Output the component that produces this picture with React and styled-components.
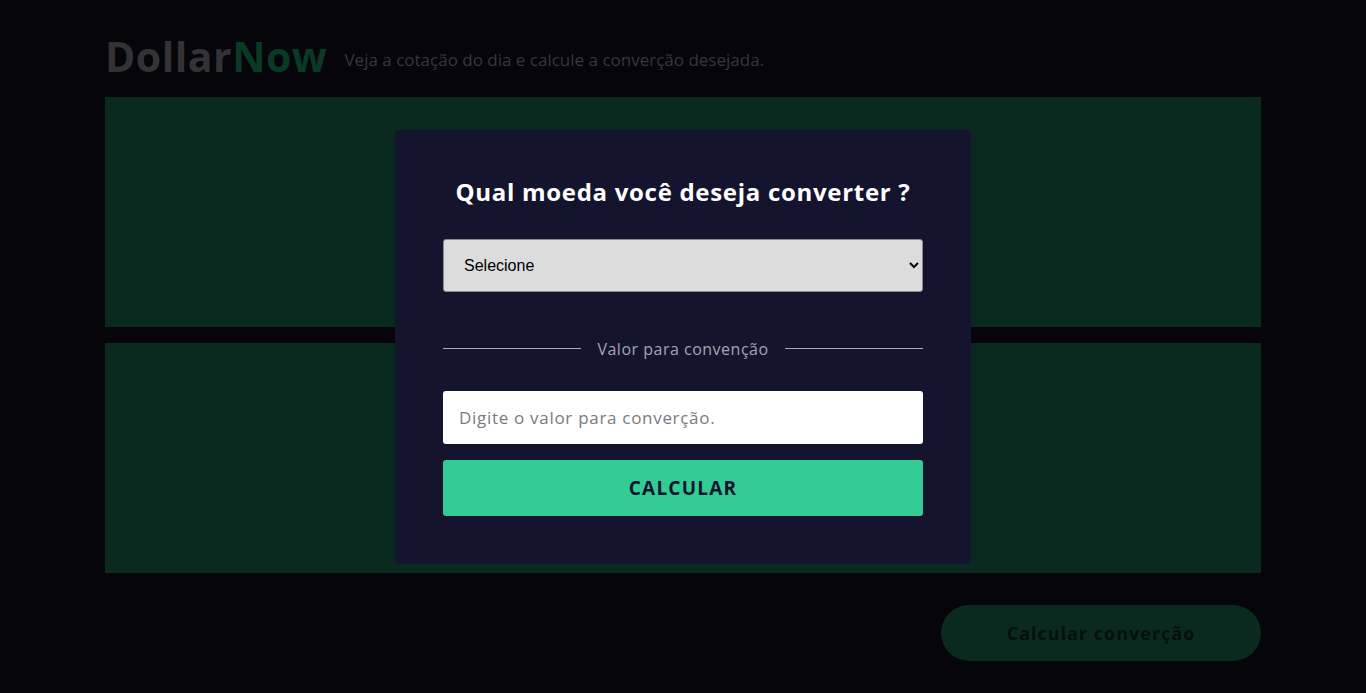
import React from "react";
import styled, { createGlobalStyle } from "styled-components";

const Global = createGlobalStyle`
  * { box-sizing: border-box; }
  html, body { margin: 0; padding: 0; background: #05050b; }
  body { font-family: "Open Sans", "Noto Sans", sans-serif; }
`;

const Page = styled.main`
  width: 1156px;
  margin: 0 auto;
  display: flex;
  flex-direction: column;
`;

const Header = styled.header`
  display: flex;
  align-items: center;
  gap: 17px;
  height: 97px;
  padding-top: 36px;
  align-content: flex-start;
  flex-wrap: wrap;
`;

const Logo = styled.h1`
  margin: 0;
  font-size: 41px;
  font-weight: 700;
  letter-spacing: 0.5px;
  color: #333335;
  line-height: 41px;
`;

const LogoAccent = styled.span`
  color: #0a3a25;
`;

const Tagline = styled.p`
  margin: 0;
  padding-top: 6px;
  font-size: 17px;
  line-height: 23px;
  color: #37373c;
`;

const Cards = styled.section`
  display: flex;
  flex-direction: column;
  gap: 16px;
`;

const Card = styled.div`
  height: 230px;
  background: #0a2a1f;
`;

const Footer = styled.div`
  display: flex;
  justify-content: flex-end;
  margin-top: 32px;
`;

const PillButton = styled.button`
  width: 320px;
  height: 56px;
  border: none;
  border-radius: 28px;
  background: #0a2a1f;
  color: #05100c;
  font-family: inherit;
  font-size: 18px;
  font-weight: 700;
  letter-spacing: 1px;
`;

const Overlay = styled.div`
  position: fixed;
  inset: 0;
  display: flex;
  align-items: center;
  justify-content: center;
`;

const Modal = styled.div`
  width: 576px;
  background: #15142f;
  border-radius: 4px;
  padding: 44px 48px 48px;
  display: flex;
  flex-direction: column;
`;

const ModalTitle = styled.h2`
  margin: 0 0 29px;
  text-align: center;
  color: #ffffff;
  font-size: 24px;
  font-weight: 700;
  letter-spacing: 0.7px;
  line-height: 36px;
`;

const Select = styled.select`
  width: 100%;
  height: 53px;
  background: #dcdcdc;
  border: 1px solid #8a8a8a;
  border-radius: 3px;
  padding: 0 16px;
  font-family: "Liberation Sans", Arial, sans-serif;
  font-size: 16px;
  color: #000;
`;

const Divider = styled.div`
  display: flex;
  align-items: center;
  gap: 16px;
  margin: 46px 0 31px;
  color: #a3a3b8;
  font-size: 16px;
  letter-spacing: 0.5px;
  line-height: 22px;
  &::before, &::after {
    content: "";
    flex: 1;
    height: 1px;
    background: #a8a8bc;
  }
`;

const Input = styled.input`
  width: 100%;
  height: 53px;
  background: #ffffff;
  border: none;
  border-radius: 3px;
  padding: 0 16px;
  font-family: inherit;
  font-size: 17px;
  letter-spacing: 0.7px;
  color: #333;
  &::placeholder { color: #7a7a80; }
`;

const SubmitButton = styled.button`
  margin-top: 16px;
  width: 100%;
  height: 56px;
  border: none;
  border-radius: 3px;
  background: #33cc95;
  color: #15142f;
  font-family: inherit;
  font-size: 19px;
  font-weight: 700;
  letter-spacing: 1.2px;
`;

export default function App() {
  return (
    <>
      <Global />
      <Page>
        <Header>
          <Logo>
            Dollar<LogoAccent>Now</LogoAccent>
          </Logo>
          <Tagline>Veja a cotação do dia e calcule a converção desejada.</Tagline>
        </Header>
        <Cards>
          <Card />
          <Card />
        </Cards>
        <Footer>
          <PillButton>Calcular converção</PillButton>
        </Footer>
      </Page>
      <Overlay>
        <Modal>
          <ModalTitle>Qual moeda você deseja converter ?</ModalTitle>
          <Select defaultValue="">
            <option value="">Selecione</option>
          </Select>
          <Divider>Valor para convenção</Divider>
          <Input placeholder="Digite o valor para converção." />
          <SubmitButton>CALCULAR</SubmitButton>
        </Modal>
      </Overlay>
    </>
  );
}
